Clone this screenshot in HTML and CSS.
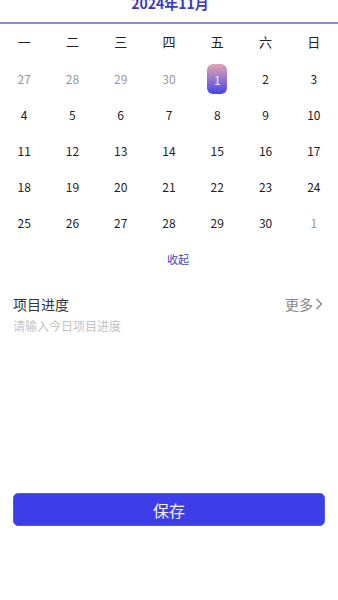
FILE: index.html
```html
<!DOCTYPE html>
<html lang="zh">
<head>
<meta charset="utf-8">
<link rel="stylesheet" href="styles.css">
</head>
<body>
<div class="page">
  <header class="header"><div class="title">2024年11月</div></header>
  <div class="grid weekdays">
    <div>一</div><div>二</div><div>三</div><div>四</div><div>五</div><div>六</div><div>日</div>
  </div>
  <div class="grid days">
    <div class="d muted">27</div><div class="d muted">28</div><div class="d muted">29</div><div class="d muted">30</div><div class="d"><span class="sel">1</span></div><div class="d">2</div><div class="d">3</div>
    <div class="d">4</div><div class="d">5</div><div class="d">6</div><div class="d">7</div><div class="d">8</div><div class="d">9</div><div class="d">10</div>
    <div class="d">11</div><div class="d">12</div><div class="d">13</div><div class="d">14</div><div class="d">15</div><div class="d">16</div><div class="d">17</div>
    <div class="d">18</div><div class="d">19</div><div class="d">20</div><div class="d">21</div><div class="d">22</div><div class="d">23</div><div class="d">24</div>
    <div class="d">25</div><div class="d">26</div><div class="d">27</div><div class="d">28</div><div class="d">29</div><div class="d">30</div><div class="d muted">1</div>
  </div>
  <div class="collapse">收起</div>
  <section class="progress">
    <div class="row">
      <span class="label">项目进度</span>
      <span class="more">更多<svg class="chev" width="8" height="12" viewBox="0 0 8 12"><polyline points="1.5,1 6.5,6 1.5,11" fill="none" stroke="#888" stroke-width="1.4"/></svg></span>
    </div>
    <div class="placeholder">请输入今日项目进度</div>
  </section>
  <button class="save">保存</button>
</div>
</body>
</html>
```
FILE: styles.css
```css
html, body {
  margin: 0;
  padding: 0;
  background: #fff;
}
body {
  font-family: "Noto Sans CJK SC", "Noto Sans", sans-serif;
  color: #222;
  overflow: hidden;
}
.page {
  width: 338px;
  height: 600px;
  overflow: hidden;
}
.header {
  height: 22px;
  border-bottom: 2px solid #8b8bd6;
  display: flex;
  justify-content: center;
}
.title {
  margin-top: -7px;
  padding-left: 2px;
  line-height: 20px;
  font-size: 14px;
  font-weight: 700;
  color: #3a3ac8;
}
.grid {
  display: grid;
  grid-template-columns: repeat(7, 1fr);
}
.weekdays div {
  height: 36px;
  line-height: 35px;
  text-align: center;
  font-size: 13px;
  color: #222;
}
.d {
  height: 36px;
  display: flex;
  align-items: center;
  justify-content: center;
  font-size: 12px;
  color: #222;
}
.d.muted {
  color: #999;
}
.sel {
  width: 20px;
  height: 30px;
  border-radius: 6px;
  background: linear-gradient(180deg, #e4a4b0 0%, #a07ccc 45%, #4343e8 100%);
  color: #f2eaf6;
  display: flex;
  align-items: center;
  justify-content: center;
  margin-top: 2px;
}
.collapse {
  height: 38px;
  line-height: 38px;
  text-align: center;
  padding-left: 18px;
  font-size: 11px;
  color: #4545c0;
}
.progress {
  padding: 16px 13px 0 13px;
}
.row {
  display: flex;
  justify-content: space-between;
  align-items: center;
  height: 20px;
}
.label {
  font-size: 14px;
  color: #333;
}
.more {
  display: flex;
  align-items: center;
  font-size: 14px;
  color: #888;
  margin-right: 2px;
}
.chev {
  margin-left: 2px;
}
.placeholder {
  margin-top: 4px;
  line-height: 16px;
  font-size: 12px;
  color: #c4c4c4;
}
.save {
  display: block;
  margin: 159px 13px 0 13px;
  width: 312px;
  height: 33px;
  border: 1px solid #5a5ae0;
  border-radius: 5px;
  background: #3e3ee8;
  color: #f4f0fa;
  font-family: "Noto Sans CJK SC", sans-serif;
  font-size: 16px;
  padding: 0;
}
```
